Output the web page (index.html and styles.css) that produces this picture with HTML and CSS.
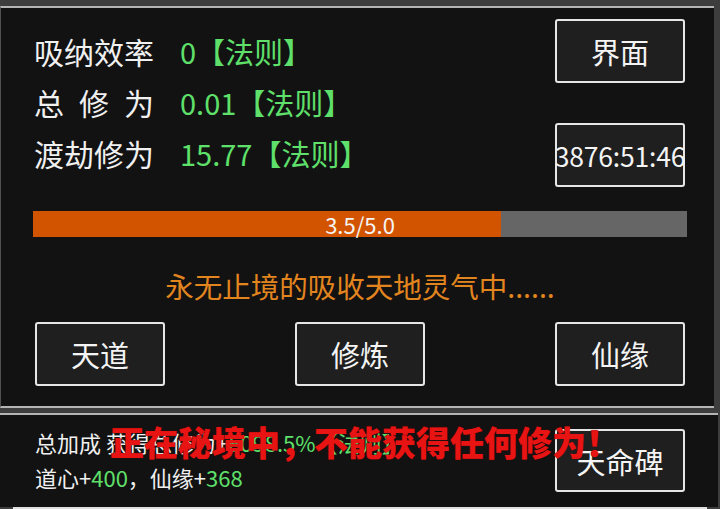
FILE: index.html
```html
<!DOCTYPE html>
<html lang="zh">
<head>
<meta charset="utf-8">
<link rel="stylesheet" href="styles.css">
</head>
<body>
<div class="top">
  <div class="stats">
    <div class="info">
      <div class="row"><span class="label">吸纳效率</span><span class="val">0【法则】</span></div>
      <div class="row"><span class="label">总&ensp;修&ensp;为</span><span class="val">0.01【法则】</span></div>
      <div class="row"><span class="label">渡劫修为</span><span class="val">15.77【法则】</span></div>
    </div>
    <div class="side">
      <div class="btn">界面</div>
      <div class="btn btn-time">3876:51:46</div>
    </div>
  </div>
  <div class="bar">
    <div class="bar-fill" style="width:71.5%"></div>
    <div class="bar-text">3.5/5.0</div>
  </div>
  <div class="msg">永无止境的吸收天地灵气中......</div>
  <div class="actions">
    <div class="btn">天道</div>
    <div class="btn">修炼</div>
    <div class="btn">仙缘</div>
  </div>
</div>
<div class="bottom">
  <div class="bonus">
    <div class="line">总加成 获得总修为+<span class="g">6098.5%【法则】</span></div>
    <div class="line">道心+<span class="g">400</span>，仙缘+<span class="g">368</span></div>
  </div>
  <div class="btn btn-tm">天命碑</div>
  <div class="warn">正在秘境中，不能获得任何修为！</div>
</div>
<div class="next"></div>
</body>
</html>
```
FILE: styles.css
```css
html, body {
  margin: 0;
  padding: 0;
  background: #3d3d3d;
  font-family: "Noto Sans CJK SC", "Noto Sans", sans-serif;
  color: #f0f0f0;
  overflow: hidden;
}
body {
  width: 720px;
  height: 509px;
  padding-top: 6px;
  box-sizing: border-box;
}
.top {
  box-sizing: border-box;
  width: 714px;
  height: 402px;
  background: #121212;
  border-top: 2px solid #b4b4b4;
  border-bottom: 2px solid #b4b4b4;
  border-left: 1px solid #505050;
  padding: 0 27px 0 32px;
  display: flex;
  flex-direction: column;
}
.stats {
  height: 203px;
  display: flex;
  justify-content: space-between;
  padding: 0 2px;
}
.info {
  padding-top: 18px;
}
.row {
  height: 51px;
  line-height: 51px;
  display: flex;
  white-space: nowrap;
}
.label {
  font-size: 30px;
  width: 146px;
  margin-left: -1px;
}
.val {
  font-size: 29px;
  color: #5fe06b;
}
.side {
  display: flex;
  flex-direction: column;
  gap: 40px;
  padding-top: 11px;
}
.btn {
  box-sizing: border-box;
  width: 130px;
  height: 64px;
  border: 2px solid #e6e6e6;
  border-radius: 3px;
  background: #1f1f1f;
  display: flex;
  align-items: center;
  justify-content: center;
  font-size: 29px;
  color: #f4f4f4;
  white-space: nowrap;
}
.btn-time {
  font-size: 26.5px;
  letter-spacing: -0.2px;
}
.bar {
  position: relative;
  height: 26px;
  background: #666666;
}
.bar-fill {
  height: 100%;
  background: #d35400;
}
.bar-text {
  position: absolute;
  inset: 0;
  text-align: center;
  line-height: 26px;
  font-size: 22px;
  color: #f4f4f4;
}
.msg {
  height: 85px;
  box-sizing: border-box;
  padding-top: 12px;
  display: flex;
  align-items: center;
  justify-content: center;
  font-size: 28.5px;
  color: #e3851f;
}
.actions {
  display: flex;
  justify-content: space-between;
  padding: 0 2px;
}
.bottom {
  position: relative;
  box-sizing: border-box;
  margin-top: 5px;
  width: 718px;
  height: 94px;
  background: #121212;
  border-top: 2px solid #b4b4b4;
  padding: 10px 33px 0 35px;
  display: flex;
  justify-content: space-between;
  align-items: flex-start;
}
.line {
  font-size: 22px;
  line-height: 35px;
  white-space: nowrap;
}
.g {
  color: #5fe06b;
}
.btn-tm {
  margin-top: 4px;
  height: 63px;
}
.warn {
  position: absolute;
  left: 110px;
  top: 7px;
  font-size: 34px;
  line-height: 40px;
  font-weight: 900;
  color: #e81414;
  text-shadow: 0 0 1px #700000;
  white-space: nowrap;
}
.next {
  margin-left: 13px;
  width: 694px;
  height: 2px;
  background: #e0e0e0;
}
```
